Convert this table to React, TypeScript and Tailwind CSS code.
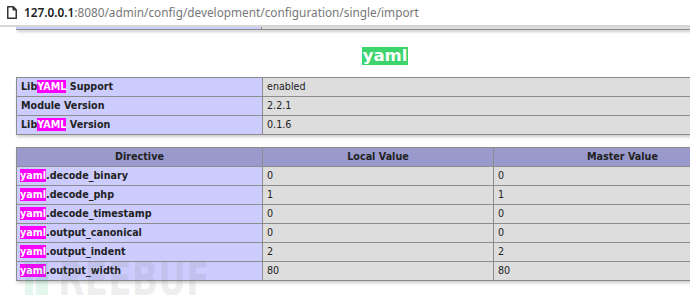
const font = { fontFamily: '"DejaVu Sans", sans-serif' }

const Hl = ({ children }: { children: string }) => (
  <span className="bg-[#ff00ff] text-white py-[1px]">{children}</span>
)

const info: [React.ReactNode, string][] = [
  [<>Lib<Hl>YAML</Hl> Support</>, 'enabled'],
  ['Module Version', '2.2.1'],
  [<>Lib<Hl>YAML</Hl> Version</>, '0.1.6'],
]

const directives: [string, string, string][] = [
  ['.decode_binary', '0', '0'],
  ['.decode_php', '1', '1'],
  ['.decode_timestamp', '0', '0'],
  ['.output_canonical', '0', '0'],
  ['.output_indent', '2', '2'],
  ['.output_width', '80', '80'],
]

const cell = 'border border-[#8c8c8c] h-[19px] px-[4px] py-0 align-middle leading-[18px]'

export default function App() {
  return (
    <div className="relative w-[690px] h-[295px] overflow-hidden bg-white text-[9.6px] text-[#222]" style={font}>
      {/* address bar */}
      <div className="flex items-center h-[27px] border-b-2 border-[#d6d6d6] bg-white pl-[7px]">
        <svg width="10" height="13" viewBox="0 0 10 13" className="mr-[7px]">
          <path d="M0.75 0.75h5.5l3 3v8.5h-8.5z M6.25 0.75v3h3" fill="none" stroke="#333" strokeWidth="1.5" strokeLinejoin="round" />
        </svg>
        <span className="text-[11.8px]" style={{ fontFamily: '"Noto Sans", sans-serif' }}>
          <span className="text-[#222] font-semibold">127.0.0.1</span>
          <span className="text-[#777]">:8080/admin/config/development/configuration/single/import</span>
        </span>
      </div>

      {/* cut off bottom of the previous table */}
      <div className="flex ml-[16px] w-[736px] h-[3px] border-b border-[#8c8c8c] shadow-[1px_2px_3px_#ccc]">
        <div className="w-[246px] bg-[#ccccff] border-r border-[#8c8c8c]" />
        <div className="flex-1 bg-[#dddddd]" />
      </div>

      <div className="w-[770px] text-center mt-[17px] leading-[18px]">
        <span className="inline-block bg-[#3dd46e] text-white font-bold text-[16.5px] leading-[18px] px-[1px] align-top">yaml</span>
      </div>

      <table className="ml-[16px] mt-[12px] w-[736px] border-collapse shadow-[1px_2px_3px_#ccc]">
        <tbody>
          {info.map(([k, v], i) => (
            <tr key={i}>
              <td className={`${cell} w-[246px] bg-[#ccccff] font-bold`}>{k}</td>
              <td className={`${cell} bg-[#dddddd]`}>{v}</td>
            </tr>
          ))}
        </tbody>
      </table>

      <table className="ml-[16px] mt-[12px] w-[736px] border-collapse shadow-[1px_2px_3px_#ccc]">
        <thead>
          <tr className="bg-[#9999cc]">
            <th className={`${cell} w-[246px] text-center`}>Directive</th>
            <th className={`${cell} w-[231px] text-center`}>Local Value</th>
            <th className={`${cell} text-center`}>Master Value</th>
          </tr>
        </thead>
        <tbody>
          {directives.map(([k, l, m]) => (
            <tr key={k}>
              <td className={`${cell} bg-[#ccccff] font-bold pl-[3px]`}>
                <Hl>yaml</Hl>
                {k}
              </td>
              <td className={`${cell} bg-[#dddddd]`}>{l}</td>
              <td className={`${cell} bg-[#dddddd]`}>{m}</td>
            </tr>
          ))}
        </tbody>
      </table>

      {/* watermark */}
      <div aria-hidden="true" className="absolute left-[25px] top-[262px] flex items-start pointer-events-none select-none">
        <div className="flex gap-[3px] mr-[10px]">
          <div className="w-[8px] h-[36px] bg-[rgba(0,170,90,0.1)]" />
          <div className="w-[12px] h-[36px] bg-[rgba(0,170,90,0.1)]" />
        </div>
        <div className="w-[150px] h-[36px] origin-left scale-x-75">
          <span className="block text-[46px] leading-[34px] font-bold text-[rgba(120,120,120,0.13)]" style={font}>
            REEBUF
          </span>
        </div>
      </div>
    </div>
  )
}
